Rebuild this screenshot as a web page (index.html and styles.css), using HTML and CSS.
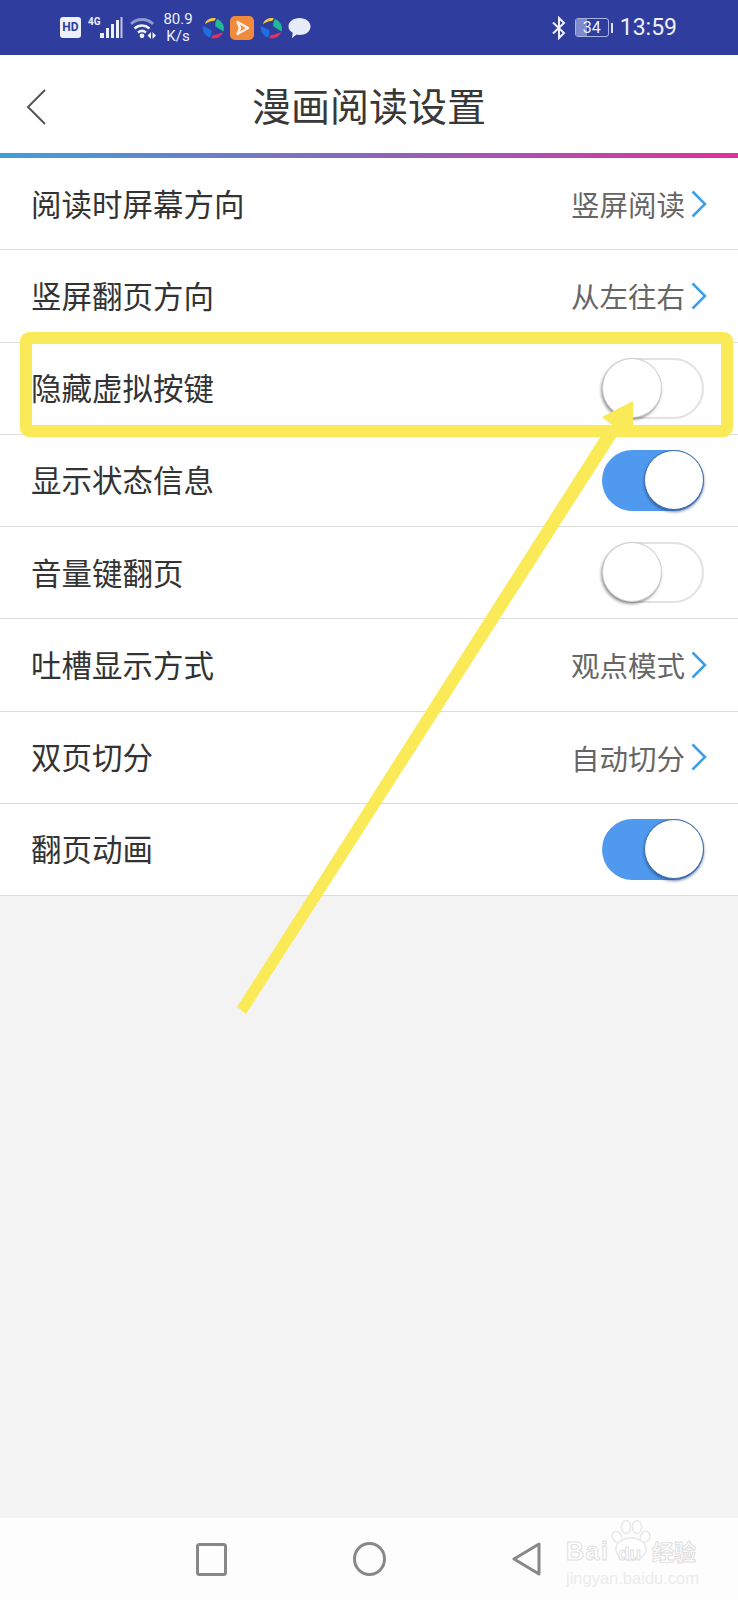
FILE: index.html
```html
<!DOCTYPE html>
<html lang="zh-CN">
<head>
    <meta charset="UTF-8">
    <meta name="viewport" content="width=device-width, initial-scale=1.0">
    <title>漫画阅读设置</title>
    <link rel="stylesheet" href="styles.css">
</head>
<body>

    <div class="page">
        <div class="status">
            <div class="status-left">
                <span class="hd">HD</span>
                <span class="net">4G</span>
                <svg class="signal" width="23" height="22" viewBox="0 0 23 22">
                    <rect x="0" y="16" width="4" height="5" fill="#eef0fa"/>
                    <rect x="6" y="11" width="3" height="10" fill="#eef0fa"/>
                    <rect x="11" y="7" width="3" height="14" fill="#eef0fa"/>
                    <rect x="16" y="3" width="3" height="18" fill="#eef0fa"/>
                    <rect x="20.500" y="0" width="2" height="21" fill="#eef0fa" opacity="0.75"/>
                </svg>
                <svg class="wifi" width="26" height="22" viewBox="0 0 26 22" fill="none">
                    <path d="M1 7C7 1 17 1 23 7" stroke="#8f99d2" stroke-width="3"/>
                    <path d="M4.500 11.500C9 7.500 15 7.500 19.500 11.500" stroke="#eef0fa" stroke-width="2.500"/>
                    <path d="M8 15.500C10.500 13.500 13.500 13.500 16 15.500" stroke="#eef0fa" stroke-width="2.500"/>
                    <circle cx="12" cy="18.800" r="2.400" fill="#eef0fa"/>
                    <path d="M17.500 18.500l3.500-3.500v7zM26 18.500l-3.500-3.500v7z" fill="#eef0fa"/>
                </svg>
                <span class="speed">80.9<br>K/s</span>
                <svg class="app" width="22" height="22" viewBox="0 0 22 22"><use href="#pinwheel"/></svg>
                <svg class="app" width="24" height="24" viewBox="0 0 24 24">
                    <rect width="24" height="24" rx="5" fill="#f08a3c"/>
                    <path d="M7.500 6l10.500 6-10.500 6 2.500-6z" fill="none" stroke="#fdf0e4" stroke-width="2.500" stroke-linejoin="round"/>
                </svg>
                <svg class="app" width="22" height="22" viewBox="0 0 22 22"><use href="#pinwheel"/></svg>
                <svg class="app" width="23" height="22" viewBox="0 0 23 22">
                    <path d="M11.500 1C17.500 1 22.500 4.500 22.500 9.500S17.500 18 11.500 18C10.500 18 9.500 17.900 8.500 17.600L4 21 4.700 15.800C2.300 14.400 .500 12.300 .500 9.500 .500 4.500 5.500 1 11.500 1Z" fill="#e8ecfa"/>
                </svg>
            </div>
            <div class="status-right">
                <svg class="bt" width="14" height="24" viewBox="0 0 14 24" fill="none">
                    <path d="M1 6.500L12 17 7 22V2L12 7 1 17.500" stroke="#eef0fa" stroke-width="2"/>
                </svg>
                <div class="battery"><span class="battery-fill"></span><span class="battery-num">34</span></div>
                <span class="battery-nub"></span>
                <span class="time">13:59</span>
            </div>
        </div>

        <div class="topbar">
            <svg class="back" width="20" height="36" viewBox="0 0 20 36" fill="none">
                <path d="M19 1L2 18 19 35" stroke="#555" stroke-width="2"/>
            </svg>
            <h1>漫画阅读设置</h1>
        </div>
        <div class="rainbow"></div>

        <div class="list">
            <div class="row"><span class="label">阅读时屏幕方向</span><span class="value">竖屏阅读<svg class="chev" width="16" height="28" viewBox="0 0 16 28" fill="none"><path d="M1.500 1.500L14 14 1.500 26.500" stroke="#3a9fe6" stroke-width="2.500"/></svg></span></div>
            <div class="row"><span class="label">竖屏翻页方向</span><span class="value">从左往右<svg class="chev" width="16" height="28" viewBox="0 0 16 28" fill="none"><path d="M1.500 1.500L14 14 1.500 26.500" stroke="#3a9fe6" stroke-width="2.500"/></svg></span></div>
            <div class="row"><span class="label">隐藏虚拟按键</span><span class="toggle"></span></div>
            <div class="row"><span class="label">显示状态信息</span><span class="toggle on"></span></div>
            <div class="row"><span class="label">音量键翻页</span><span class="toggle"></span></div>
            <div class="row"><span class="label">吐槽显示方式</span><span class="value">观点模式<svg class="chev" width="16" height="28" viewBox="0 0 16 28" fill="none"><path d="M1.500 1.500L14 14 1.500 26.500" stroke="#3a9fe6" stroke-width="2.500"/></svg></span></div>
            <div class="row"><span class="label">双页切分</span><span class="value">自动切分<svg class="chev" width="16" height="28" viewBox="0 0 16 28" fill="none"><path d="M1.500 1.500L14 14 1.500 26.500" stroke="#3a9fe6" stroke-width="2.500"/></svg></span></div>
            <div class="row"><span class="label">翻页动画</span><span class="toggle on"></span></div>
        </div>

        <div class="filler"></div>

        <div class="navbar">
            <svg width="31" height="33" viewBox="0 0 31 33" fill="none"><rect x="1.500" y="1.500" width="28" height="30" rx="2" stroke="#888" stroke-width="3"/></svg>
            <svg width="33" height="34" viewBox="0 0 33 34" fill="none"><ellipse cx="16.500" cy="17" rx="15" ry="15.500" stroke="#888" stroke-width="3"/></svg>
            <svg width="29" height="34" viewBox="0 0 29 34" fill="none"><path d="M27 2V32L2 17Z" stroke="#888" stroke-width="3" stroke-linejoin="round"/></svg>
        </div>

        <!-- annotation drawn on top of the screenshot -->
        <svg class="markup" width="738" height="1600" viewBox="0 0 738 1600" fill="none">
            <rect x="26" y="338" width="701" height="93" rx="3" stroke="#fbea57" stroke-width="12"/>
            <path d="M237 1007L308 896 606 428H622L322 896 246 1014Z" fill="#fbea57"/>
            <path d="M633 401L602 417 612 425 633 427Z" fill="#fbea57"/>
        </svg>

        <div class="watermark">
            <svg class="paw" width="40" height="42" viewBox="0 0 40 42" fill="#fff" stroke="#e8e8e8" stroke-width="1.500">
                <ellipse cx="6" cy="17" rx="4.500" ry="6" transform="rotate(-25 6 17)"/>
                <ellipse cx="15" cy="7" rx="4.500" ry="6.500"/>
                <ellipse cx="26" cy="7" rx="4.500" ry="6.500"/>
                <ellipse cx="34" cy="17" rx="4.500" ry="6" transform="rotate(25 34 17)"/>
                <ellipse cx="20" cy="29" rx="15" ry="11"/>
            </svg>
            <div class="wm-main"><span class="wm-bai">Bai</span><span class="wm-du">du</span><span class="wm-cn">经验</span></div>
            <div class="wm-url">jingyan.baidu.com</div>
        </div>

        <svg width="0" height="0" class="defs">
            <defs>
                <g id="pinwheel">
                    <path d="M3 7C4 3 9 0 14 1.500L12 4C9 3.500 6 5 3 7Z" fill="#f2c838"/>
                    <path d="M15 2C20 4 23 9 21.500 14.500L13.500 9.500C13 7 13.500 4.500 15 2Z" fill="#22b89a"/>
                    <path d="M21 15.500C19 20 14 22.500 9 21L11 18C14 18.500 17 16 21 15.500Z" fill="#e8305e"/>
                    <path d="M8 20.500C3 19 0 14 1 9L9 13C10 15.500 9.500 18 8 20.500Z" fill="#1f6fe0"/>
                </g>
            </defs>
        </svg>
    </div>

</body>
</html>
```

FILE: styles.css
```css
/* General Styling */
body {
    margin: 0;
    font-family: "Noto Sans CJK SC", "Liberation Sans", sans-serif;
    color: #333;
}
.page {
    position: relative;
    width: 738px;
    height: 1600px;
    display: flex;
    flex-direction: column;
    overflow: hidden;
    background: #f3f3f4;
}

/* Status bar */
.status {
    height: 55px;
    flex: none;
    background: #2f3e9e;
    display: flex;
    justify-content: space-between;
    align-items: center;
    color: #eef0fa;
    font-family: Roboto, sans-serif;
}
.status-left {
    display: flex;
    align-items: center;
    padding-left: 60px;
}
.status-right {
    display: flex;
    align-items: center;
    padding-right: 61px;
}
.hd {
    width: 21px;
    height: 21px;
    background: #eef0fa;
    color: #2f3e9e;
    border-radius: 3px;
    font-size: 12px;
    font-weight: 700;
    line-height: 21px;
    text-align: center;
}
.net {
    font-size: 10px;
    font-weight: 700;
    margin: -12px 0 0 7px;
    width: 12px;
}
.signal {
    margin-left: 0;
}
.wifi {
    margin-left: 7px;
}
.speed {
    width: 32px;
    margin-left: 6px;
    font-size: 15px;
    line-height: 17px;
    text-align: center;
}
.app {
    margin-left: 6px;
}
.speed + .app {
    margin-left: 8px;
}
.bt {
    margin-right: 9px;
}
.battery {
    position: relative;
    width: 32px;
    height: 17px;
    border: 1px solid #aab2e2;
    border-radius: 3px;
    overflow: hidden;
}
.battery-fill {
    position: absolute;
    left: 0;
    top: 0;
    bottom: 0;
    width: 11px;
    background: #7f8bcf;
}
.battery-num {
    position: relative;
    display: block;
    font-size: 16px;
    line-height: 17px;
    text-align: center;
}
.battery-nub {
    width: 2px;
    height: 10px;
    margin-left: 2px;
    background: #dfe2f4;
}
.time {
    margin-left: 7px;
    font-size: 23px;
}

/* Title bar */
.topbar {
    height: 98px;
    flex: none;
    background: #fff;
    display: grid;
    grid-template-columns: 1fr auto 1fr;
    align-items: center;
}
.back {
    margin: 6px 0 0 26px;
}
h1 {
    margin: 0;
    font-size: 39px;
    font-weight: 400;
    color: #383838;
}
.rainbow {
    height: 5px;
    flex: none;
    background: linear-gradient(to right, #3f9fdc, #8a66bc 50%, #e2309a);
}

/* Settings rows */
.list {
    background: #fff;
    flex: none;
}
.row {
    height: 91.25px;
    border-bottom: 1px solid #dcdcdc;
    padding: 0 34px 0 31px;
    display: flex;
    justify-content: space-between;
    align-items: center;
    font-size: 30.5px;
    color: #333;
}
.label {
    margin-top: -2px;
}
.value {
    display: flex;
    align-items: center;
    gap: 6px;
    margin-right: -3px;
    font-size: 28.5px;
    color: #666;
}
.toggle {
    position: relative;
    width: 102px;
    height: 61px;
    box-sizing: border-box;
    border: 2px solid #e2e2e2;
    border-radius: 31px;
    background: #fff;
}
.toggle::after {
    content: "";
    position: absolute;
    left: -2px;
    top: -2px;
    width: 60px;
    height: 60px;
    box-sizing: border-box;
    border-radius: 50%;
    border: 1px solid #ccc;
    background: #fff;
    box-shadow: -1px 2px 3px rgba(0, 0, 0, 0.4);
}
.toggle.on {
    border: none;
    background: #4f99ee;
}
.toggle.on::after {
    left: 42px;
    top: 0;
    border-color: #3f6fae;
    box-shadow: 0 2px 3px rgba(30, 60, 120, 0.6);
}

.filler {
    flex: 1;
}

/* Bottom navigation */
.navbar {
    height: 82px;
    flex: none;
    background: #fdfdfd;
    display: flex;
    align-items: center;
    gap: 126px;
    padding-left: 196px;
}

/* Annotation and watermark on top */
.markup {
    position: absolute;
    left: 0;
    top: 0;
}
.defs {
    position: absolute;
}
.watermark {
    position: absolute;
    left: 566px;
    top: 1520px;
    width: 134px;
    color: #fff;
    font-family: "Liberation Sans", "Noto Sans CJK SC", sans-serif;
}
.paw {
    position: absolute;
    left: 45px;
    top: 0;
}
.wm-main {
    position: relative;
    display: flex;
    align-items: baseline;
    margin-top: 18px;
    font-weight: 700;
    line-height: 26px;
    -webkit-text-stroke: 1px #e0e0e0;
}
.wm-bai {
    font-size: 25px;
    width: 52px;
    letter-spacing: 1.5px;
}
.wm-du {
    font-size: 19px;
    width: 34px;
}
.wm-cn {
    font-size: 22px;
}
.wm-url {
    font-size: 16.500px;
    line-height: 22px;
    white-space: nowrap;
    color: #ececec;
}
```
